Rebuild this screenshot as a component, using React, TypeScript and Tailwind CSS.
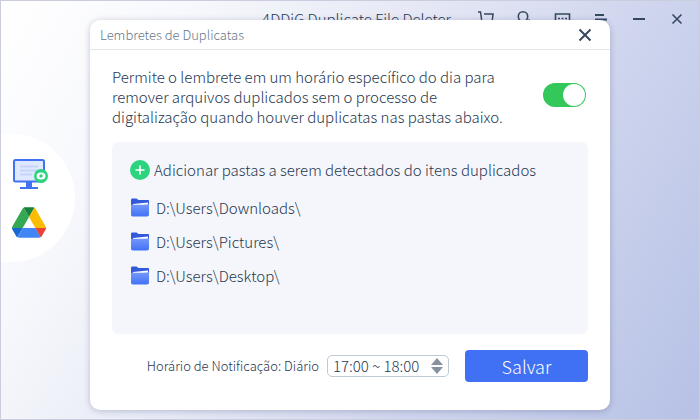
import { useState } from 'react';

const FOLDERS = ['D:\\Users\\Downloads\\', 'D:\\Users\\Pictures\\', 'D:\\Users\\Desktop\\'];

export default function App() {
  return (
    <div className="relative flex min-h-screen flex-col border border-[#c9cddd] bg-[linear-gradient(120deg,#ffffff_0%,#f7f8fc_20%,#e6e9f5_44%,#d0d6ee_68%,#b6c1e5_100%)] font-['Noto_Sans_CJK_SC','Noto_Sans',sans-serif] font-light text-[#1f3850]">
      <TitleBar />
      <SideNav />
      {/* Modal layer */}
      <div className="absolute inset-0 flex items-start justify-center px-5 pt-[19px]">
        <ReminderDialog />
      </div>
    </div>
  );
}

function TitleBar() {
  return (
    <header className="flex h-9 items-center justify-end pr-[13px]">
      <h1 className="mr-[27px] text-[15px] leading-5">4DDiG Duplicate File Deleter</h1>
      <div className="flex items-center gap-5 text-[#34495e]">
        <button aria-label="Loja">
          <svg width="18" height="18" viewBox="0 0 18 18" fill="none" stroke="currentColor" strokeWidth="1.5">
            <path d="M0 2h2.500l1.500 10.500h10l1-8.500H6" />
            <circle cx="5" cy="15.500" r="1" />
            <circle cx="13" cy="15.500" r="1" />
          </svg>
        </button>
        <button aria-label="Conta">
          <svg width="18" height="18" viewBox="0 0 18 18" fill="none" stroke="currentColor" strokeWidth="1.6">
            <circle cx="7" cy="6.500" r="4.700" />
            <path d="M0 17c0-4 3-5.800 7-5.800M12.500 9.500l2 2" />
          </svg>
        </button>
        <button aria-label="Comentários">
          <svg width="18" height="18" viewBox="0 0 18 18" fill="none" stroke="currentColor" strokeWidth="1.6">
            <path d="M1.500 4h14v10.500h-5L8.500 17l-2-2.500h-5z" />
            <path d="M4 8.500h2M7.500 8.500h2M11 8.500h2" />
          </svg>
        </button>
        <button aria-label="Menu">
          <svg width="18" height="18" viewBox="0 0 18 18" fill="none" stroke="currentColor" strokeWidth="1.8">
            <path d="M3 5h9M3 9.500h12M3 14h12" />
          </svg>
        </button>
        <button aria-label="Minimizar">
          <svg width="18" height="18" viewBox="0 0 18 18" fill="none" stroke="currentColor" strokeWidth="2">
            <path d="M3 9h12" />
          </svg>
        </button>
        <button aria-label="Fechar janela">
          <svg width="18" height="18" viewBox="0 0 18 18" fill="none" stroke="currentColor" strokeWidth="1.6">
            <path d="M4.500 4.500l9 9M13.500 4.500l-9 9" />
          </svg>
        </button>
      </div>
    </header>
  );
}

function SideNav() {
  return (
    <nav className="mt-[97px] flex h-32 w-[74px] flex-col items-start gap-4 rounded-r-full bg-white pt-[23px] pl-[10px]">
      <button aria-label="Computador">
        <svg width="38" height="34" viewBox="0 0 38 34">
          <rect x="3" y="3" width="30" height="21.500" rx="1.500" fill="#e0e8ff" stroke="#4272f4" strokeWidth="2" />
          <path d="M9 9.500h18M9 13.500h18M9 17.500h12" stroke="#c6d3fb" strokeWidth="2" />
          <path d="M15 25h6v5h-6z" fill="#4272f4" />
          <path d="M9 30h18v2H9z" fill="#4272f4" />
          <circle cx="30" cy="19" r="7" fill="#2bd47d" />
          <ellipse cx="30" cy="19" rx="4.500" ry="3.500" fill="#fff" />
          <circle cx="30" cy="19" r="1.700" fill="#2bd47d" />
        </svg>
      </button>
      <button aria-label="Google Drive" className="pl-px">
        <svg width="34" height="31" viewBox="0 0 87.3 78">
          <path d="M6.600 66.850l3.850 6.650c.8 1.400 1.950 2.500 3.300 3.300l13.750-23.800H0c0 1.550.4 3.100 1.200 4.500z" fill="#1967d2" />
          <path d="M43.650 25L29.900 1.200c-1.350.8-2.500 1.900-3.300 3.300L1.200 48.500A9 9 0 000 53h27.500z" fill="#34a853" />
          <path d="M73.550 76.800c1.350-.8 2.500-1.900 3.300-3.300l1.600-2.750L86.100 57.500c.8-1.400 1.200-2.950 1.200-4.500H59.800l5.850 11.500z" fill="#ea4335" />
          <path d="M43.650 25L57.400 1.200C56.050.4 54.500 0 52.900 0H34.400c-1.600 0-3.150.45-4.500 1.200z" fill="#188038" />
          <path d="M59.800 53H27.500L13.750 76.800c1.350.8 2.900 1.200 4.500 1.200h50.800c1.600 0 3.150-.45 4.500-1.200z" fill="#4285f4" />
          <path d="M73.400 26.500L60.700 4.500c-.8-1.400-1.950-2.500-3.300-3.300L43.650 25 59.800 53h27.450c0-1.550-.4-3.100-1.200-4.500z" fill="#fbbc04" />
        </svg>
      </button>
    </nav>
  );
}

function ReminderDialog() {
  const [enabled, setEnabled] = useState(true);
  const [hour, setHour] = useState(17);
  const range = `${hour}:00 ~ ${hour + 1}:00`;

  return (
    <section
      role="dialog"
      aria-labelledby="dialog-title"
      className="w-full max-w-[520px] rounded-[10px] bg-white shadow-[0_1px_6px_rgba(60,70,120,0.3)]"
    >
      <div className="flex h-[30px] items-center justify-between border-b border-[#e5e6e9] pr-4 pl-[10px]">
        <h2 id="dialog-title" className="text-[13px] leading-5 text-[#66788c]">Lembretes de Duplicatas</h2>
        <button aria-label="Fechar" className="text-[#34495e]">
          <svg width="18" height="18" viewBox="0 0 18 18" fill="none" stroke="currentColor" strokeWidth="2">
            <path d="M3.500 3.500l11 11M14.500 3.500l-11 11" />
          </svg>
        </button>
      </div>

      <div className="px-[22px] pt-[17px] pb-7">
        <div className="flex items-start justify-between">
          <label htmlFor="reminder" className="max-w-[410px] text-[15px] leading-5">
            Permite o lembrete em um horário específico do dia para remover arquivos duplicados sem o processo de
            digitalização quando houver duplicatas nas pastas abaixo.
          </label>
          <input
            id="reminder"
            type="checkbox"
            role="switch"
            checked={enabled}
            onChange={e => setEnabled(e.target.checked)}
            className="mt-4 mr-[2px] flex h-6 w-[43px] shrink-0 appearance-none items-center rounded-full bg-gray-300 p-px before:size-[22px] before:rounded-full before:bg-white checked:justify-end checked:bg-[#34c759]"
          />
        </div>

        <div className="mt-[15px] rounded-md bg-[#f5f6fb] px-[18px] pt-[18px] pb-[41px]">
          <button className="flex items-center gap-1 text-[15px] leading-5">
            <svg width="20" height="20" viewBox="0 0 20 20">
              <circle cx="10" cy="10" r="10" fill="#2bd47d" />
              <path d="M10 5.500v9M5.500 10h9" stroke="#fff" strokeWidth="1.600" />
            </svg>
            Adicionar pastas a serem detectados do itens duplicados
          </button>
          <ul className="mt-[11px]">
            {FOLDERS.map(path => (
              <li key={path} className="flex h-[34px] items-center gap-[6px] text-[15px] leading-5">
                <FolderIcon />
                {path}
              </li>
            ))}
          </ul>
        </div>

        <div className="mt-4 flex items-center justify-end">
          <label htmlFor="time" className="mr-2 text-[13px] leading-5">Horário de Notificação: Diário</label>
          <div className="flex h-[22px] w-[122px] items-center justify-between rounded-[5px] border border-[#bccad8] pr-[5px] pl-[5px]">
            <input id="time" readOnly value={range} className="w-[94px] text-[15px] leading-5 outline-none" />
            <div className="flex flex-col gap-[2px] text-[#87929f]">
              <button aria-label="Mais tarde" onClick={() => setHour(h => Math.min(h + 1, 23))}>
                <svg width="12" height="7" viewBox="0 0 12 7" className="block" fill="currentColor">
                  <path d="M6 0l6 7H0z" />
                </svg>
              </button>
              <button aria-label="Mais cedo" onClick={() => setHour(h => Math.max(h - 1, 0))}>
                <svg width="12" height="7" viewBox="0 0 12 7" className="block" fill="currentColor">
                  <path d="M6 7l6-7H0z" />
                </svg>
              </button>
            </div>
          </div>
          <button className="ml-4 h-8 w-[123px] rounded bg-[#4070f4] text-[18px] leading-6 text-white">Salvar</button>
        </div>
      </div>
    </section>
  );
}

function FolderIcon() {
  return (
    <svg width="20" height="20" viewBox="0 0 20 20">
      <defs>
        <linearGradient id="folder" x1="0" y1="0" x2="0" y2="1">
          <stop offset="0" stopColor="#7698fb" />
          <stop offset="1" stopColor="#4272f4" />
        </linearGradient>
      </defs>
      <path d="M1 2C1 1 1.500.5 2.500.5h4l2 1.500H18c.7 0 1 .4 1 1v6H1z" fill="#3259dc" />
      <path d="M3 6L18 4.500V8H3z" fill="#fff" />
      <path d="M1 6.800c4 0 14 .2 18-.6V16.500c0 1.300-.7 2-2 2H3c-1.300 0-2-.7-2-2z" fill="url(#folder)" />
    </svg>
  );
}
